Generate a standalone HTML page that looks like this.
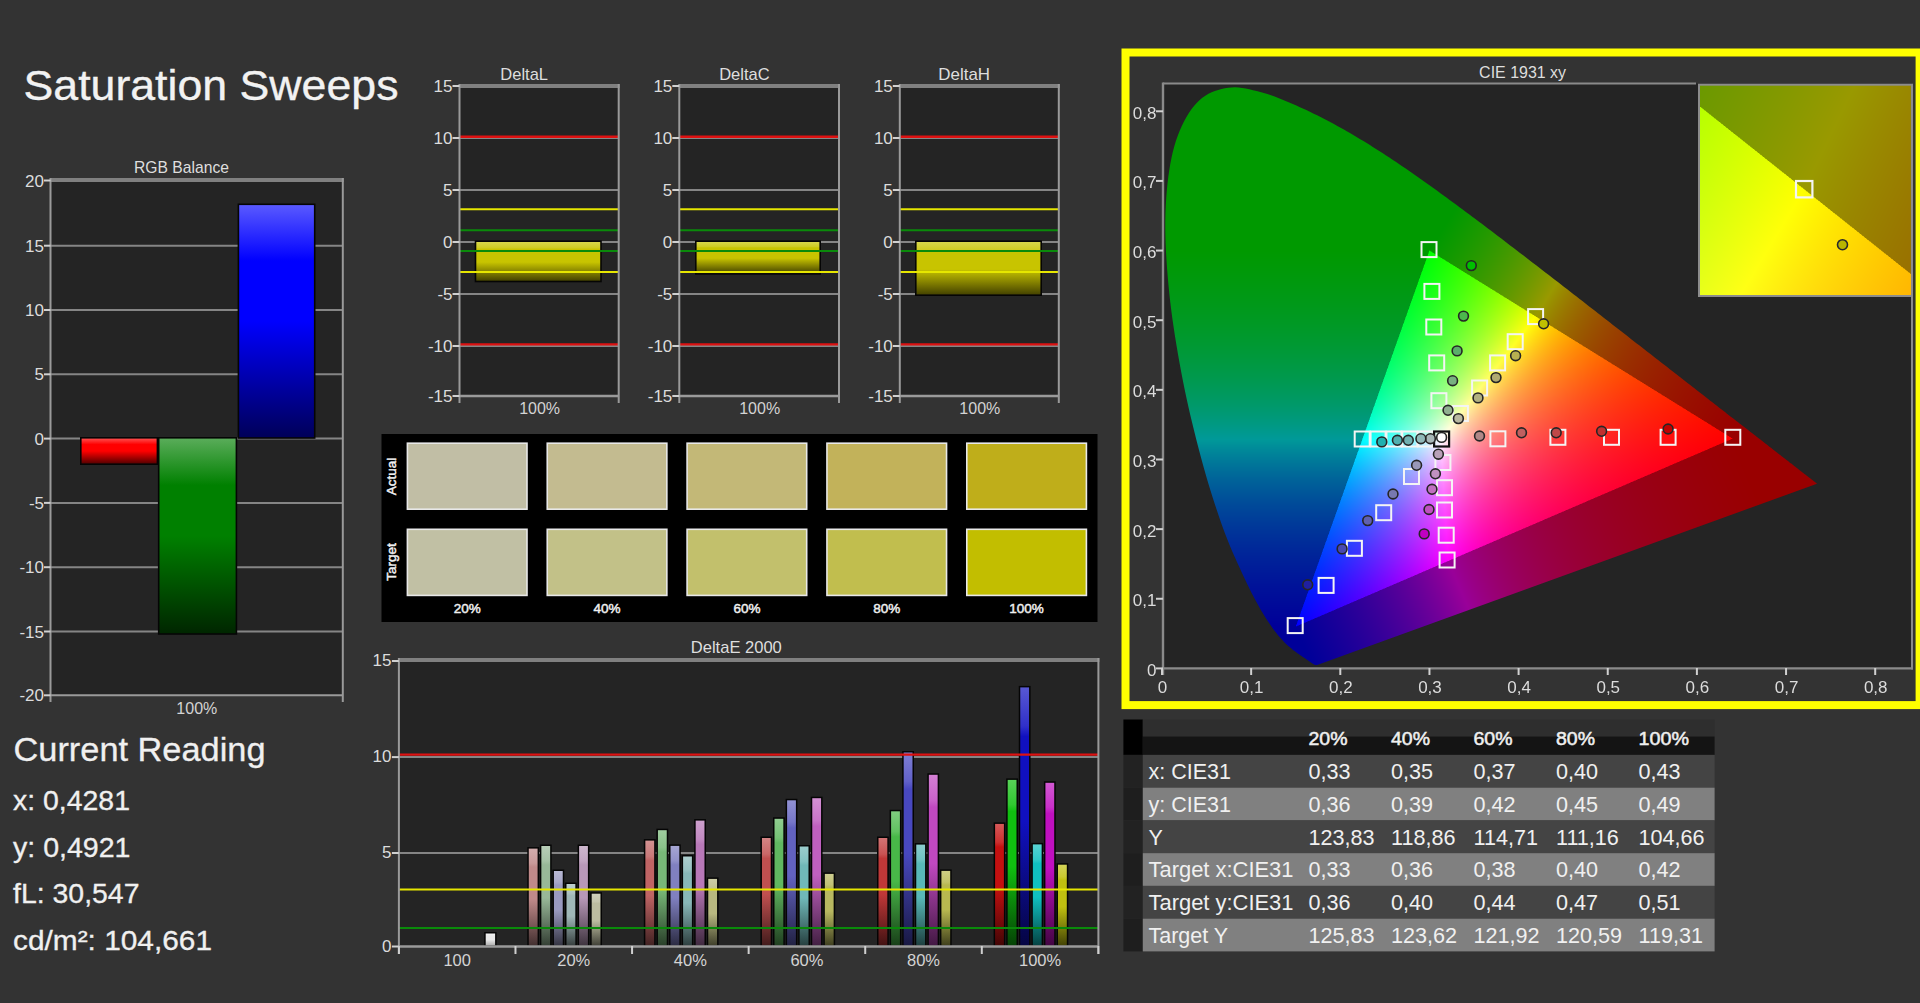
<!DOCTYPE html>
<html><head><meta charset="utf-8"><title>Saturation Sweeps</title>
<style>
html,body{margin:0;padding:0;background:#333333;}
body{width:1920px;height:1003px;overflow:hidden;position:relative;font-family:"Liberation Sans", sans-serif;}
svg{position:absolute;left:0;top:0;}
canvas{position:absolute;}
text{font-family:"Liberation Sans", sans-serif;}
</style></head><body>
<svg width="1920" height="1003" viewBox="0 0 1920 1003">
<defs><linearGradient id="g0" x1="0" y1="0" x2="0" y2="1"><stop offset="0" stop-color="#ff4c4c"/><stop offset="0.24" stop-color="#ff0000"/><stop offset="0.5" stop-color="#ff0000"/><stop offset="1" stop-color="#590000"/></linearGradient><linearGradient id="g1" x1="0" y1="0" x2="0" y2="1"><stop offset="0" stop-color="#59ac59"/><stop offset="0.24" stop-color="#008000"/><stop offset="0.5" stop-color="#008000"/><stop offset="1" stop-color="#002600"/></linearGradient><linearGradient id="g2" x1="0" y1="0" x2="0" y2="1"><stop offset="0" stop-color="#5959ff"/><stop offset="0.24" stop-color="#0000ff"/><stop offset="0.5" stop-color="#0000ff"/><stop offset="1" stop-color="#000059"/></linearGradient><linearGradient id="g3" x1="0" y1="0" x2="0" y2="1"><stop offset="0" stop-color="#d8d64c"/><stop offset="0.15" stop-color="#cfcc22"/><stop offset="0.19" stop-color="#c8c400"/><stop offset="0.52" stop-color="#c8c400"/><stop offset="1" stop-color="#464400"/></linearGradient><linearGradient id="g4" x1="0" y1="0" x2="0" y2="1"><stop offset="0" stop-color="#d3adad"/><stop offset="0.15" stop-color="#c99a9a"/><stop offset="0.19" stop-color="#c08a8a"/><stop offset="0.52" stop-color="#c08a8a"/><stop offset="1" stop-color="#433030"/></linearGradient><linearGradient id="g5" x1="0" y1="0" x2="0" y2="1"><stop offset="0" stop-color="#b7cdb7"/><stop offset="0.15" stop-color="#a6c2a6"/><stop offset="0.19" stop-color="#98b898"/><stop offset="0.52" stop-color="#98b898"/><stop offset="1" stop-color="#354035"/></linearGradient><linearGradient id="g6" x1="0" y1="0" x2="0" y2="1"><stop offset="0" stop-color="#b8b8d3"/><stop offset="0.15" stop-color="#a8a8c9"/><stop offset="0.19" stop-color="#9a9ac0"/><stop offset="0.52" stop-color="#9a9ac0"/><stop offset="1" stop-color="#353543"/></linearGradient><linearGradient id="g7" x1="0" y1="0" x2="0" y2="1"><stop offset="0" stop-color="#bccdcd"/><stop offset="0.15" stop-color="#adc2c2"/><stop offset="0.19" stop-color="#a0b8b8"/><stop offset="0.52" stop-color="#a0b8b8"/><stop offset="1" stop-color="#384040"/></linearGradient><linearGradient id="g8" x1="0" y1="0" x2="0" y2="1"><stop offset="0" stop-color="#cdb7cd"/><stop offset="0.15" stop-color="#c2a6c2"/><stop offset="0.19" stop-color="#b898b8"/><stop offset="0.52" stop-color="#b898b8"/><stop offset="1" stop-color="#403540"/></linearGradient><linearGradient id="g9" x1="0" y1="0" x2="0" y2="1"><stop offset="0" stop-color="#d0d0bc"/><stop offset="0.15" stop-color="#c5c5ad"/><stop offset="0.19" stop-color="#bcbca0"/><stop offset="0.52" stop-color="#bcbca0"/><stop offset="1" stop-color="#414138"/></linearGradient><linearGradient id="g10" x1="0" y1="0" x2="0" y2="1"><stop offset="0" stop-color="#d39292"/><stop offset="0.15" stop-color="#c97979"/><stop offset="0.19" stop-color="#c06464"/><stop offset="0.52" stop-color="#c06464"/><stop offset="1" stop-color="#432323"/></linearGradient><linearGradient id="g11" x1="0" y1="0" x2="0" y2="1"><stop offset="0" stop-color="#a0cda0"/><stop offset="0.15" stop-color="#8ac28a"/><stop offset="0.19" stop-color="#78b878"/><stop offset="0.52" stop-color="#78b878"/><stop offset="1" stop-color="#2a402a"/></linearGradient><linearGradient id="g12" x1="0" y1="0" x2="0" y2="1"><stop offset="0" stop-color="#a6a6d3"/><stop offset="0.15" stop-color="#9191c9"/><stop offset="0.19" stop-color="#8080c0"/><stop offset="0.52" stop-color="#8080c0"/><stop offset="1" stop-color="#2c2c43"/></linearGradient><linearGradient id="g13" x1="0" y1="0" x2="0" y2="1"><stop offset="0" stop-color="#accdcd"/><stop offset="0.15" stop-color="#98c2c2"/><stop offset="0.19" stop-color="#88b8b8"/><stop offset="0.52" stop-color="#88b8b8"/><stop offset="1" stop-color="#2f4040"/></linearGradient><linearGradient id="g14" x1="0" y1="0" x2="0" y2="1"><stop offset="0" stop-color="#cda0cd"/><stop offset="0.15" stop-color="#c28ac2"/><stop offset="0.19" stop-color="#b878b8"/><stop offset="0.52" stop-color="#b878b8"/><stop offset="1" stop-color="#402a40"/></linearGradient><linearGradient id="g15" x1="0" y1="0" x2="0" y2="1"><stop offset="0" stop-color="#cdcda6"/><stop offset="0.15" stop-color="#c2c291"/><stop offset="0.19" stop-color="#b8b880"/><stop offset="0.52" stop-color="#b8b880"/><stop offset="1" stop-color="#40402c"/></linearGradient><linearGradient id="g16" x1="0" y1="0" x2="0" y2="1"><stop offset="0" stop-color="#d38484"/><stop offset="0.15" stop-color="#c96868"/><stop offset="0.19" stop-color="#c05050"/><stop offset="0.52" stop-color="#c05050"/><stop offset="1" stop-color="#431c1c"/></linearGradient><linearGradient id="g17" x1="0" y1="0" x2="0" y2="1"><stop offset="0" stop-color="#90cd90"/><stop offset="0.15" stop-color="#75c275"/><stop offset="0.19" stop-color="#60b860"/><stop offset="0.52" stop-color="#60b860"/><stop offset="1" stop-color="#214021"/></linearGradient><linearGradient id="g18" x1="0" y1="0" x2="0" y2="1"><stop offset="0" stop-color="#9191d3"/><stop offset="0.15" stop-color="#7777c9"/><stop offset="0.19" stop-color="#6262c0"/><stop offset="0.52" stop-color="#6262c0"/><stop offset="1" stop-color="#222243"/></linearGradient><linearGradient id="g19" x1="0" y1="0" x2="0" y2="1"><stop offset="0" stop-color="#9bcdcd"/><stop offset="0.15" stop-color="#83c2c2"/><stop offset="0.19" stop-color="#70b8b8"/><stop offset="0.52" stop-color="#70b8b8"/><stop offset="1" stop-color="#274040"/></linearGradient><linearGradient id="g20" x1="0" y1="0" x2="0" y2="1"><stop offset="0" stop-color="#d390d3"/><stop offset="0.15" stop-color="#c975c9"/><stop offset="0.19" stop-color="#c060c0"/><stop offset="0.52" stop-color="#c060c0"/><stop offset="1" stop-color="#432143"/></linearGradient><linearGradient id="g21" x1="0" y1="0" x2="0" y2="1"><stop offset="0" stop-color="#cdcd90"/><stop offset="0.15" stop-color="#c2c275"/><stop offset="0.19" stop-color="#b8b860"/><stop offset="0.52" stop-color="#b8b860"/><stop offset="1" stop-color="#404021"/></linearGradient><linearGradient id="g22" x1="0" y1="0" x2="0" y2="1"><stop offset="0" stop-color="#d37474"/><stop offset="0.15" stop-color="#c95353"/><stop offset="0.19" stop-color="#c03838"/><stop offset="0.52" stop-color="#c03838"/><stop offset="1" stop-color="#431313"/></linearGradient><linearGradient id="g23" x1="0" y1="0" x2="0" y2="1"><stop offset="0" stop-color="#7fcd7f"/><stop offset="0.15" stop-color="#61c261"/><stop offset="0.19" stop-color="#48b848"/><stop offset="0.52" stop-color="#48b848"/><stop offset="1" stop-color="#194019"/></linearGradient><linearGradient id="g24" x1="0" y1="0" x2="0" y2="1"><stop offset="0" stop-color="#7f7fd3"/><stop offset="0.15" stop-color="#6161c9"/><stop offset="0.19" stop-color="#4848c0"/><stop offset="0.52" stop-color="#4848c0"/><stop offset="1" stop-color="#191943"/></linearGradient><linearGradient id="g25" x1="0" y1="0" x2="0" y2="1"><stop offset="0" stop-color="#8acdcd"/><stop offset="0.15" stop-color="#6fc2c2"/><stop offset="0.19" stop-color="#58b8b8"/><stop offset="0.52" stop-color="#58b8b8"/><stop offset="1" stop-color="#1e4040"/></linearGradient><linearGradient id="g26" x1="0" y1="0" x2="0" y2="1"><stop offset="0" stop-color="#d37fd3"/><stop offset="0.15" stop-color="#c961c9"/><stop offset="0.19" stop-color="#c048c0"/><stop offset="0.52" stop-color="#c048c0"/><stop offset="1" stop-color="#431943"/></linearGradient><linearGradient id="g27" x1="0" y1="0" x2="0" y2="1"><stop offset="0" stop-color="#cdcd84"/><stop offset="0.15" stop-color="#c2c268"/><stop offset="0.19" stop-color="#b8b850"/><stop offset="0.52" stop-color="#b8b850"/><stop offset="1" stop-color="#40401c"/></linearGradient><linearGradient id="g28" x1="0" y1="0" x2="0" y2="1"><stop offset="0" stop-color="#d65858"/><stop offset="0.15" stop-color="#cc3030"/><stop offset="0.19" stop-color="#c41010"/><stop offset="0.52" stop-color="#c41010"/><stop offset="1" stop-color="#440505"/></linearGradient><linearGradient id="g29" x1="0" y1="0" x2="0" y2="1"><stop offset="0" stop-color="#58d358"/><stop offset="0.15" stop-color="#30c930"/><stop offset="0.19" stop-color="#10c010"/><stop offset="0.52" stop-color="#10c010"/><stop offset="1" stop-color="#054305"/></linearGradient><linearGradient id="g30" x1="0" y1="0" x2="0" y2="1"><stop offset="0" stop-color="#5858d3"/><stop offset="0.15" stop-color="#3030c9"/><stop offset="0.19" stop-color="#1010c0"/><stop offset="0.52" stop-color="#1010c0"/><stop offset="1" stop-color="#050543"/></linearGradient><linearGradient id="g31" x1="0" y1="0" x2="0" y2="1"><stop offset="0" stop-color="#58d3d3"/><stop offset="0.15" stop-color="#30c9c9"/><stop offset="0.19" stop-color="#10c0c0"/><stop offset="0.52" stop-color="#10c0c0"/><stop offset="1" stop-color="#054343"/></linearGradient><linearGradient id="g32" x1="0" y1="0" x2="0" y2="1"><stop offset="0" stop-color="#d358d3"/><stop offset="0.15" stop-color="#c930c9"/><stop offset="0.19" stop-color="#c010c0"/><stop offset="0.52" stop-color="#c010c0"/><stop offset="1" stop-color="#430543"/></linearGradient><linearGradient id="g33" x1="0" y1="0" x2="0" y2="1"><stop offset="0" stop-color="#d3d358"/><stop offset="0.15" stop-color="#c9c930"/><stop offset="0.19" stop-color="#c0c010"/><stop offset="0.52" stop-color="#c0c010"/><stop offset="1" stop-color="#434305"/></linearGradient><linearGradient id="g34" x1="0" y1="0" x2="0" y2="1"><stop offset="0" stop-color="#f1f1f1"/><stop offset="0.15" stop-color="#ececec"/><stop offset="0.19" stop-color="#e8e8e8"/><stop offset="0.52" stop-color="#e8e8e8"/><stop offset="1" stop-color="#aeaeae"/></linearGradient><clipPath id="clL"><polygon points="1317.21,664.92 1317.17,664.93 1317.1,664.95 1317.03,664.97 1316.94,664.99 1316.85,665.01 1316.74,665.03 1316.63,665.04 1316.5,665.06 1316.36,665.07 1316.22,665.07 1316.06,665.07 1315.87,665.06 1315.63,665.03 1315.36,664.98 1315.07,664.93 1314.8,664.85 1314.56,664.75 1314.32,664.64 1314.08,664.51 1313.82,664.36 1313.54,664.2 1313.25,664.02 1312.93,663.82 1312.57,663.59 1312.18,663.34 1311.74,663.06 1311.28,662.75 1310.79,662.41 1310.28,662.05 1309.75,661.66 1309.18,661.25 1308.56,660.81 1307.9,660.35 1307.2,659.87 1306.45,659.35 1305.62,658.79 1304.72,658.18 1303.74,657.52 1302.71,656.82 1301.61,656.07 1300.46,655.29 1299.25,654.47 1297.98,653.58 1296.62,652.59 1295.18,651.52 1293.66,650.38 1292.06,649.12 1290.38,647.72 1288.64,646.22 1286.83,644.64 1284.91,642.82 1282.8,640.61 1280.5,638.06 1278.05,635.2 1275.43,631.93 1272.64,628.15 1269.68,623.92 1266.56,619.27 1263.24,614.01 1259.71,607.95 1255.96,601.15 1252,593.67 1247.82,585.34 1243.39,575.99 1238.64,565.66 1233.6,554.42 1228.42,542.12 1223.25,528.63 1218.07,513.88 1212.82,497.96 1207.59,480.95 1202.47,462.96 1197.37,443.75 1192.27,423.35 1187.39,402.26 1182.95,381 1178.9,359.35 1175.15,337.17 1171.89,315.02 1169.31,293.46 1167.36,272.39 1165.98,251.61 1165.31,231.48 1165.48,212.4 1166.5,194.21 1168.3,176.8 1170.92,160.58 1174.39,145.96 1178.81,132.9 1184.12,121.24 1190.14,111.18 1196.68,102.92 1203.82,96.69 1211.63,92.31 1219.85,89.44 1228.24,87.74 1236.84,87.42 1245.74,88.56 1254.78,90.61 1263.81,93.03 1272.85,95.88 1281.96,99.38 1291.02,103.23 1299.92,107.17 1308.6,111.16 1317.15,115.33 1325.6,119.65 1333.97,124.09 1342.25,128.66 1350.44,133.35 1358.57,138.17 1366.69,143.11 1374.8,148.16 1382.87,153.35 1390.93,158.63 1398.96,164 1406.97,169.45 1414.95,174.99 1422.91,180.61 1430.88,186.28 1438.84,192.01 1446.79,197.81 1454.74,203.66 1462.7,209.54 1470.68,215.47 1478.67,221.45 1486.65,227.47 1494.62,233.5 1502.57,239.55 1510.51,245.63 1518.44,251.72 1526.36,257.8 1534.27,263.89 1542.19,269.97 1550.07,276.05 1557.92,282.11 1565.71,288.15 1573.48,294.18 1581.19,300.18 1588.85,306.13 1596.45,312.05 1604.01,317.93 1611.49,323.77 1618.89,329.53 1626.22,335.24 1633.48,340.89 1640.64,346.47 1647.69,351.96 1654.64,357.35 1661.5,362.67 1668.22,367.88 1674.79,372.99 1681.21,377.99 1687.49,382.9 1693.59,387.68 1699.49,392.28 1705.14,396.68 1710.59,400.92 1715.86,405.01 1720.97,408.99 1725.95,412.87 1730.78,416.63 1735.43,420.24 1739.87,423.69 1744.09,426.95 1748.1,430.04 1751.92,432.99 1755.56,435.8 1759.02,438.49 1762.28,441.04 1765.37,443.46 1768.31,445.76 1771.08,447.93 1773.68,449.96 1776.14,451.88 1778.47,453.7 1780.68,455.41 1782.76,457.01 1784.72,458.52 1786.58,459.97 1788.35,461.34 1790.01,462.64 1791.58,463.87 1793.09,465.05 1794.55,466.19 1795.94,467.28 1797.27,468.31 1798.53,469.3 1799.74,470.24 1800.88,471.14 1801.96,471.98 1802.99,472.78 1803.96,473.53 1804.88,474.23 1805.75,474.88 1806.55,475.5 1807.3,476.07 1807.99,476.61 1808.63,477.11 1809.23,477.59 1809.8,478.03 1810.33,478.44 1810.82,478.83 1811.28,479.19 1811.71,479.52 1812.1,479.83 1812.47,480.12 1812.8,480.37 1813.08,480.6 1813.33,480.79 1813.56,480.97 1813.78,481.14 1813.98,481.3 1814.16,481.44 1814.35,481.59 1814.58,481.76 1814.86,481.99 1815.18,482.23 1815.51,482.49 1815.83,482.74 1816.15,482.99 1816.48,483.25 1816.78,483.48 1816.99,483.65"/></clipPath><clipPath id="clT"><polygon points="1732.56,438.59 1429.45,250.56 1295.72,626.62"/></clipPath><linearGradient id="fbL" gradientUnits="userSpaceOnUse" x1="0" y1="250.56" x2="0" y2="626.62"><stop offset="0" stop-color="#009900"/><stop offset="0.05" stop-color="#009908"/><stop offset="0.1" stop-color="#009911"/><stop offset="0.15" stop-color="#00991b"/><stop offset="0.2" stop-color="#009926"/><stop offset="0.25" stop-color="#009933"/><stop offset="0.3" stop-color="#009941"/><stop offset="0.35" stop-color="#009952"/><stop offset="0.4" stop-color="#009965"/><stop offset="0.45" stop-color="#00997c"/><stop offset="0.5" stop-color="#009998"/><stop offset="0.55" stop-color="#007e99"/><stop offset="0.6" stop-color="#006799"/><stop offset="0.65" stop-color="#005399"/><stop offset="0.7" stop-color="#004299"/><stop offset="0.75" stop-color="#003399"/><stop offset="0.8" stop-color="#002799"/><stop offset="0.85" stop-color="#001b99"/><stop offset="0.9" stop-color="#001199"/><stop offset="0.95" stop-color="#000899"/><stop offset="1" stop-color="#000099"/></linearGradient><linearGradient id="fbGR" gradientUnits="userSpaceOnUse" x1="1429.45" y1="250.56" x2="1732.56" y2="438.59"><stop offset="0" stop-color="#009900"/><stop offset="0.05" stop-color="#0f9900"/><stop offset="0.1" stop-color="#1f9900"/><stop offset="0.15" stop-color="#329900"/><stop offset="0.2" stop-color="#479900"/><stop offset="0.25" stop-color="#5e9900"/><stop offset="0.3" stop-color="#799900"/><stop offset="0.35" stop-color="#989900"/><stop offset="0.4" stop-color="#997c00"/><stop offset="0.45" stop-color="#996500"/><stop offset="0.5" stop-color="#995300"/><stop offset="0.55" stop-color="#994400"/><stop offset="0.6" stop-color="#993700"/><stop offset="0.65" stop-color="#992d00"/><stop offset="0.7" stop-color="#992300"/><stop offset="0.75" stop-color="#991c00"/><stop offset="0.8" stop-color="#991500"/><stop offset="0.85" stop-color="#990f00"/><stop offset="0.9" stop-color="#990900"/><stop offset="0.95" stop-color="#990400"/><stop offset="1" stop-color="#990000"/></linearGradient><linearGradient id="fbBR" gradientUnits="userSpaceOnUse" x1="1295.72" y1="626.62" x2="1732.56" y2="438.59"><stop offset="0" stop-color="#000099"/><stop offset="0.05" stop-color="#0f0099"/><stop offset="0.1" stop-color="#200099"/><stop offset="0.15" stop-color="#320099"/><stop offset="0.2" stop-color="#470099"/><stop offset="0.25" stop-color="#5f0099"/><stop offset="0.3" stop-color="#7a0099"/><stop offset="0.35" stop-color="#990098"/><stop offset="0.4" stop-color="#99007b"/><stop offset="0.45" stop-color="#990064"/><stop offset="0.5" stop-color="#990052"/><stop offset="0.55" stop-color="#990043"/><stop offset="0.6" stop-color="#990037"/><stop offset="0.65" stop-color="#99002c"/><stop offset="0.7" stop-color="#990023"/><stop offset="0.75" stop-color="#99001b"/><stop offset="0.8" stop-color="#990014"/><stop offset="0.85" stop-color="#99000e"/><stop offset="0.9" stop-color="#990009"/><stop offset="0.95" stop-color="#990004"/><stop offset="1" stop-color="#990000"/></linearGradient><radialGradient id="fbW" gradientUnits="userSpaceOnUse" cx="1440.77" cy="439.28" r="260"><stop offset="0" stop-color="#fff" stop-opacity="1"/><stop offset="0.12" stop-color="#fff" stop-opacity="0.62"/><stop offset="0.25" stop-color="#fff" stop-opacity="0.4"/><stop offset="0.45" stop-color="#fff" stop-opacity="0.2"/><stop offset="0.7" stop-color="#fff" stop-opacity="0.06"/><stop offset="1" stop-color="#fff" stop-opacity="0"/></radialGradient><clipPath id="clI"><rect x="1699" y="85" width="213" height="211"/></clipPath><linearGradient id="fbIin" gradientUnits="userSpaceOnUse" x1="1636" y1="55.79" x2="1978.4" y2="327.7"><stop offset="0" stop-color="#91ff00"/><stop offset="0.1" stop-color="#a5ff00"/><stop offset="0.2" stop-color="#baff00"/><stop offset="0.3" stop-color="#d0ff00"/><stop offset="0.4" stop-color="#e8ff00"/><stop offset="0.5" stop-color="#fffd00"/><stop offset="0.6" stop-color="#ffe400"/><stop offset="0.7" stop-color="#ffcf00"/><stop offset="0.8" stop-color="#ffbc00"/><stop offset="0.9" stop-color="#ffab00"/><stop offset="1" stop-color="#ff9b00"/></linearGradient><linearGradient id="fbIout" gradientUnits="userSpaceOnUse" x1="1636" y1="55.79" x2="1978.4" y2="327.7"><stop offset="0" stop-color="#579900"/><stop offset="0.1" stop-color="#639900"/><stop offset="0.2" stop-color="#6f9900"/><stop offset="0.3" stop-color="#7d9900"/><stop offset="0.4" stop-color="#8b9900"/><stop offset="0.5" stop-color="#999800"/><stop offset="0.6" stop-color="#998900"/><stop offset="0.7" stop-color="#997c00"/><stop offset="0.8" stop-color="#997100"/><stop offset="0.9" stop-color="#996600"/><stop offset="1" stop-color="#995d00"/></linearGradient></defs>
<rect x="0" y="0" width="1920" height="1003" fill="#333333"/>
<text x="23.5" y="99.5" font-size="43" fill="#f2f2f2" text-anchor="start" font-weight="normal" stroke="#f2f2f2" stroke-width="0.35" textLength="375" lengthAdjust="spacingAndGlyphs">Saturation Sweeps</text><rect x="50.5" y="180" width="292.3" height="515.5" fill="#242424"/><text x="181.5" y="173.4" font-size="17" fill="#dedede" text-anchor="middle" font-weight="normal" textLength="95" lengthAdjust="spacingAndGlyphs">RGB Balance</text><line x1="50.5" y1="245.7" x2="342.8" y2="245.7" stroke="#858585" stroke-width="2"/><line x1="50.5" y1="310" x2="342.8" y2="310" stroke="#858585" stroke-width="2"/><line x1="50.5" y1="374.3" x2="342.8" y2="374.3" stroke="#858585" stroke-width="2"/><line x1="50.5" y1="438.6" x2="342.8" y2="438.6" stroke="#858585" stroke-width="2"/><line x1="50.5" y1="502.9" x2="342.8" y2="502.9" stroke="#858585" stroke-width="2"/><line x1="50.5" y1="567.2" x2="342.8" y2="567.2" stroke="#858585" stroke-width="2"/><line x1="50.5" y1="631.5" x2="342.8" y2="631.5" stroke="#858585" stroke-width="2"/><rect x="80" y="437" width="78.2" height="28" fill="#050505"/><rect x="81.6" y="438.6" width="75" height="24.8" fill="url(#g0)"/><rect x="157.9" y="437" width="79.3" height="197.8" fill="#050505"/><rect x="159.5" y="438.6" width="76.1" height="194.6" fill="url(#g1)"/><rect x="237.6" y="203.5" width="77.9" height="235.3" fill="#050505"/><rect x="239.2" y="205.1" width="74.7" height="232.1" fill="url(#g2)"/><line x1="50.5" y1="180" x2="343.8" y2="180" stroke="#808080" stroke-width="4"/><line x1="50.5" y1="178" x2="50.5" y2="702" stroke="#9a9a9a" stroke-width="2"/><line x1="342.8" y1="178" x2="342.8" y2="702" stroke="#9a9a9a" stroke-width="2"/><line x1="50.5" y1="695.3" x2="342.8" y2="695.3" stroke="#9a9a9a" stroke-width="2"/><line x1="44" y1="180.5" x2="50.5" y2="180.5" stroke="#d0d0d0" stroke-width="2"/><text x="44" y="186.5" font-size="17" fill="#dcdcdc" text-anchor="end" font-weight="normal">20</text><line x1="44" y1="245.7" x2="50.5" y2="245.7" stroke="#d0d0d0" stroke-width="2"/><text x="44" y="251.7" font-size="17" fill="#dcdcdc" text-anchor="end" font-weight="normal">15</text><line x1="44" y1="310" x2="50.5" y2="310" stroke="#d0d0d0" stroke-width="2"/><text x="44" y="316" font-size="17" fill="#dcdcdc" text-anchor="end" font-weight="normal">10</text><line x1="44" y1="374.3" x2="50.5" y2="374.3" stroke="#d0d0d0" stroke-width="2"/><text x="44" y="380.3" font-size="17" fill="#dcdcdc" text-anchor="end" font-weight="normal">5</text><line x1="44" y1="438.6" x2="50.5" y2="438.6" stroke="#d0d0d0" stroke-width="2"/><text x="44" y="444.6" font-size="17" fill="#dcdcdc" text-anchor="end" font-weight="normal">0</text><line x1="44" y1="502.9" x2="50.5" y2="502.9" stroke="#d0d0d0" stroke-width="2"/><text x="44" y="508.9" font-size="17" fill="#dcdcdc" text-anchor="end" font-weight="normal">-5</text><line x1="44" y1="567.2" x2="50.5" y2="567.2" stroke="#d0d0d0" stroke-width="2"/><text x="44" y="573.2" font-size="17" fill="#dcdcdc" text-anchor="end" font-weight="normal">-10</text><line x1="44" y1="631.5" x2="50.5" y2="631.5" stroke="#d0d0d0" stroke-width="2"/><text x="44" y="637.5" font-size="17" fill="#dcdcdc" text-anchor="end" font-weight="normal">-15</text><line x1="44" y1="695.3" x2="50.5" y2="695.3" stroke="#d0d0d0" stroke-width="2"/><text x="44" y="701.3" font-size="17" fill="#dcdcdc" text-anchor="end" font-weight="normal">-20</text><text x="196.8" y="713.5" font-size="16" fill="#d4d4d4" text-anchor="middle" font-weight="normal">100%</text><rect x="459.5" y="86" width="159.2" height="310" fill="#242424"/><text x="524.2" y="79.5" font-size="17" fill="#dedede" text-anchor="middle" font-weight="normal" textLength="47.7" lengthAdjust="spacingAndGlyphs">DeltaL</text><line x1="459.5" y1="138" x2="618.7" y2="138" stroke="#858585" stroke-width="2"/><line x1="459.5" y1="190" x2="618.7" y2="190" stroke="#858585" stroke-width="2"/><line x1="459.5" y1="242" x2="618.7" y2="242" stroke="#858585" stroke-width="2"/><line x1="459.5" y1="294" x2="618.7" y2="294" stroke="#858585" stroke-width="2"/><line x1="459.5" y1="346" x2="618.7" y2="346" stroke="#858585" stroke-width="2"/><rect x="474.7" y="240.4" width="127.1" height="41.9" fill="#050505"/><rect x="476.3" y="242" width="123.9" height="38.7" fill="url(#g3)"/><line x1="459.5" y1="209.3" x2="618.7" y2="209.3" stroke="#e6e600" stroke-width="2"/><line x1="459.5" y1="272.1" x2="618.7" y2="272.1" stroke="#e6e600" stroke-width="2"/><line x1="459.5" y1="230.2" x2="618.7" y2="230.2" stroke="#0a8a0a" stroke-width="2"/><line x1="459.5" y1="250.9" x2="618.7" y2="250.9" stroke="#0a8a0a" stroke-width="2"/><line x1="459.5" y1="136.7" x2="618.7" y2="136.7" stroke="#dd1111" stroke-width="2.4"/><line x1="459.5" y1="344.4" x2="618.7" y2="344.4" stroke="#dd1111" stroke-width="2.4"/><line x1="459.5" y1="86" x2="619.7" y2="86" stroke="#808080" stroke-width="4"/><line x1="459.5" y1="84" x2="459.5" y2="403" stroke="#9a9a9a" stroke-width="2"/><line x1="618.7" y1="84" x2="618.7" y2="403" stroke="#9a9a9a" stroke-width="2"/><line x1="459.5" y1="396" x2="618.7" y2="396" stroke="#9a9a9a" stroke-width="2.4"/><line x1="452.5" y1="86" x2="459.5" y2="86" stroke="#d0d0d0" stroke-width="2"/><text x="452.5" y="92" font-size="17" fill="#dcdcdc" text-anchor="end" font-weight="normal">15</text><line x1="452.5" y1="138" x2="459.5" y2="138" stroke="#d0d0d0" stroke-width="2"/><text x="452.5" y="144" font-size="17" fill="#dcdcdc" text-anchor="end" font-weight="normal">10</text><line x1="452.5" y1="190" x2="459.5" y2="190" stroke="#d0d0d0" stroke-width="2"/><text x="452.5" y="196" font-size="17" fill="#dcdcdc" text-anchor="end" font-weight="normal">5</text><line x1="452.5" y1="242" x2="459.5" y2="242" stroke="#d0d0d0" stroke-width="2"/><text x="452.5" y="248" font-size="17" fill="#dcdcdc" text-anchor="end" font-weight="normal">0</text><line x1="452.5" y1="294" x2="459.5" y2="294" stroke="#d0d0d0" stroke-width="2"/><text x="452.5" y="300" font-size="17" fill="#dcdcdc" text-anchor="end" font-weight="normal">-5</text><line x1="452.5" y1="346" x2="459.5" y2="346" stroke="#d0d0d0" stroke-width="2"/><text x="452.5" y="352" font-size="17" fill="#dcdcdc" text-anchor="end" font-weight="normal">-10</text><line x1="452.5" y1="396" x2="459.5" y2="396" stroke="#d0d0d0" stroke-width="2"/><text x="452.5" y="402" font-size="17" fill="#dcdcdc" text-anchor="end" font-weight="normal">-15</text><text x="539.6" y="414" font-size="16" fill="#d4d4d4" text-anchor="middle" font-weight="normal">100%</text><rect x="679.3" y="86" width="159.7" height="310" fill="#242424"/><text x="744.4" y="79.5" font-size="17" fill="#dedede" text-anchor="middle" font-weight="normal" textLength="50.5" lengthAdjust="spacingAndGlyphs">DeltaC</text><line x1="679.3" y1="138" x2="839" y2="138" stroke="#858585" stroke-width="2"/><line x1="679.3" y1="190" x2="839" y2="190" stroke="#858585" stroke-width="2"/><line x1="679.3" y1="242" x2="839" y2="242" stroke="#858585" stroke-width="2"/><line x1="679.3" y1="294" x2="839" y2="294" stroke="#858585" stroke-width="2"/><line x1="679.3" y1="346" x2="839" y2="346" stroke="#858585" stroke-width="2"/><rect x="695" y="240.4" width="126" height="34.3" fill="#050505"/><rect x="696.6" y="242" width="122.8" height="31.1" fill="url(#g3)"/><line x1="679.3" y1="209.3" x2="839" y2="209.3" stroke="#e6e600" stroke-width="2"/><line x1="679.3" y1="272.1" x2="839" y2="272.1" stroke="#e6e600" stroke-width="2"/><line x1="679.3" y1="230.2" x2="839" y2="230.2" stroke="#0a8a0a" stroke-width="2"/><line x1="679.3" y1="250.9" x2="839" y2="250.9" stroke="#0a8a0a" stroke-width="2"/><line x1="679.3" y1="136.7" x2="839" y2="136.7" stroke="#dd1111" stroke-width="2.4"/><line x1="679.3" y1="344.4" x2="839" y2="344.4" stroke="#dd1111" stroke-width="2.4"/><line x1="679.3" y1="86" x2="840" y2="86" stroke="#808080" stroke-width="4"/><line x1="679.3" y1="84" x2="679.3" y2="403" stroke="#9a9a9a" stroke-width="2"/><line x1="839" y1="84" x2="839" y2="403" stroke="#9a9a9a" stroke-width="2"/><line x1="679.3" y1="396" x2="839" y2="396" stroke="#9a9a9a" stroke-width="2.4"/><line x1="672.3" y1="86" x2="679.3" y2="86" stroke="#d0d0d0" stroke-width="2"/><text x="672.3" y="92" font-size="17" fill="#dcdcdc" text-anchor="end" font-weight="normal">15</text><line x1="672.3" y1="138" x2="679.3" y2="138" stroke="#d0d0d0" stroke-width="2"/><text x="672.3" y="144" font-size="17" fill="#dcdcdc" text-anchor="end" font-weight="normal">10</text><line x1="672.3" y1="190" x2="679.3" y2="190" stroke="#d0d0d0" stroke-width="2"/><text x="672.3" y="196" font-size="17" fill="#dcdcdc" text-anchor="end" font-weight="normal">5</text><line x1="672.3" y1="242" x2="679.3" y2="242" stroke="#d0d0d0" stroke-width="2"/><text x="672.3" y="248" font-size="17" fill="#dcdcdc" text-anchor="end" font-weight="normal">0</text><line x1="672.3" y1="294" x2="679.3" y2="294" stroke="#d0d0d0" stroke-width="2"/><text x="672.3" y="300" font-size="17" fill="#dcdcdc" text-anchor="end" font-weight="normal">-5</text><line x1="672.3" y1="346" x2="679.3" y2="346" stroke="#d0d0d0" stroke-width="2"/><text x="672.3" y="352" font-size="17" fill="#dcdcdc" text-anchor="end" font-weight="normal">-10</text><line x1="672.3" y1="396" x2="679.3" y2="396" stroke="#d0d0d0" stroke-width="2"/><text x="672.3" y="402" font-size="17" fill="#dcdcdc" text-anchor="end" font-weight="normal">-15</text><text x="759.65" y="414" font-size="16" fill="#d4d4d4" text-anchor="middle" font-weight="normal">100%</text><rect x="899.8" y="86" width="159" height="310" fill="#242424"/><text x="964.2" y="79.5" font-size="17" fill="#dedede" text-anchor="middle" font-weight="normal" textLength="51.7" lengthAdjust="spacingAndGlyphs">DeltaH</text><line x1="899.8" y1="138" x2="1058.8" y2="138" stroke="#858585" stroke-width="2"/><line x1="899.8" y1="190" x2="1058.8" y2="190" stroke="#858585" stroke-width="2"/><line x1="899.8" y1="242" x2="1058.8" y2="242" stroke="#858585" stroke-width="2"/><line x1="899.8" y1="294" x2="1058.8" y2="294" stroke="#858585" stroke-width="2"/><line x1="899.8" y1="346" x2="1058.8" y2="346" stroke="#858585" stroke-width="2"/><rect x="915" y="240.4" width="127" height="55.6" fill="#050505"/><rect x="916.6" y="242" width="123.8" height="52.4" fill="url(#g3)"/><line x1="899.8" y1="209.3" x2="1058.8" y2="209.3" stroke="#e6e600" stroke-width="2"/><line x1="899.8" y1="272.1" x2="1058.8" y2="272.1" stroke="#e6e600" stroke-width="2"/><line x1="899.8" y1="230.2" x2="1058.8" y2="230.2" stroke="#0a8a0a" stroke-width="2"/><line x1="899.8" y1="250.9" x2="1058.8" y2="250.9" stroke="#0a8a0a" stroke-width="2"/><line x1="899.8" y1="136.7" x2="1058.8" y2="136.7" stroke="#dd1111" stroke-width="2.4"/><line x1="899.8" y1="344.4" x2="1058.8" y2="344.4" stroke="#dd1111" stroke-width="2.4"/><line x1="899.8" y1="86" x2="1059.8" y2="86" stroke="#808080" stroke-width="4"/><line x1="899.8" y1="84" x2="899.8" y2="403" stroke="#9a9a9a" stroke-width="2"/><line x1="1058.8" y1="84" x2="1058.8" y2="403" stroke="#9a9a9a" stroke-width="2"/><line x1="899.8" y1="396" x2="1058.8" y2="396" stroke="#9a9a9a" stroke-width="2.4"/><line x1="892.8" y1="86" x2="899.8" y2="86" stroke="#d0d0d0" stroke-width="2"/><text x="892.8" y="92" font-size="17" fill="#dcdcdc" text-anchor="end" font-weight="normal">15</text><line x1="892.8" y1="138" x2="899.8" y2="138" stroke="#d0d0d0" stroke-width="2"/><text x="892.8" y="144" font-size="17" fill="#dcdcdc" text-anchor="end" font-weight="normal">10</text><line x1="892.8" y1="190" x2="899.8" y2="190" stroke="#d0d0d0" stroke-width="2"/><text x="892.8" y="196" font-size="17" fill="#dcdcdc" text-anchor="end" font-weight="normal">5</text><line x1="892.8" y1="242" x2="899.8" y2="242" stroke="#d0d0d0" stroke-width="2"/><text x="892.8" y="248" font-size="17" fill="#dcdcdc" text-anchor="end" font-weight="normal">0</text><line x1="892.8" y1="294" x2="899.8" y2="294" stroke="#d0d0d0" stroke-width="2"/><text x="892.8" y="300" font-size="17" fill="#dcdcdc" text-anchor="end" font-weight="normal">-5</text><line x1="892.8" y1="346" x2="899.8" y2="346" stroke="#d0d0d0" stroke-width="2"/><text x="892.8" y="352" font-size="17" fill="#dcdcdc" text-anchor="end" font-weight="normal">-10</text><line x1="892.8" y1="396" x2="899.8" y2="396" stroke="#d0d0d0" stroke-width="2"/><text x="892.8" y="402" font-size="17" fill="#dcdcdc" text-anchor="end" font-weight="normal">-15</text><text x="979.8" y="414" font-size="16" fill="#d4d4d4" text-anchor="middle" font-weight="normal">100%</text><rect x="381.5" y="434" width="716" height="188" fill="#000000"/><rect x="407.4" y="443.2" width="119.6" height="66" fill="#c1bea5" stroke="#e8e8e8" stroke-width="1.6"/><rect x="407.4" y="529.3" width="119.6" height="66.1" fill="#c1c0a4" stroke="#e8e8e8" stroke-width="1.6"/><text x="467.2" y="612.5" font-size="13.5" fill="#f0f0f0" text-anchor="middle" font-weight="normal" stroke="#f0f0f0" stroke-width="0.45">20%</text><rect x="547.25" y="443.2" width="119.6" height="66" fill="#c3bb90" stroke="#e8e8e8" stroke-width="1.6"/><rect x="547.25" y="529.3" width="119.6" height="66.1" fill="#c2c188" stroke="#e8e8e8" stroke-width="1.6"/><text x="607.05" y="612.5" font-size="13.5" fill="#f0f0f0" text-anchor="middle" font-weight="normal" stroke="#f0f0f0" stroke-width="0.45">40%</text><rect x="687.1" y="443.2" width="119.6" height="66" fill="#c3b877" stroke="#e8e8e8" stroke-width="1.6"/><rect x="687.1" y="529.3" width="119.6" height="66.1" fill="#c2c06c" stroke="#e8e8e8" stroke-width="1.6"/><text x="746.9" y="612.5" font-size="13.5" fill="#f0f0f0" text-anchor="middle" font-weight="normal" stroke="#f0f0f0" stroke-width="0.45">60%</text><rect x="826.95" y="443.2" width="119.6" height="66" fill="#c2b25a" stroke="#e8e8e8" stroke-width="1.6"/><rect x="826.95" y="529.3" width="119.6" height="66.1" fill="#c1be4e" stroke="#e8e8e8" stroke-width="1.6"/><text x="886.75" y="612.5" font-size="13.5" fill="#f0f0f0" text-anchor="middle" font-weight="normal" stroke="#f0f0f0" stroke-width="0.45">80%</text><rect x="966.8" y="443.2" width="119.6" height="66" fill="#bfae1a" stroke="#e8e8e8" stroke-width="1.6"/><rect x="966.8" y="529.3" width="119.6" height="66.1" fill="#c2be00" stroke="#e8e8e8" stroke-width="1.6"/><text x="1026.6" y="612.5" font-size="13.5" fill="#f0f0f0" text-anchor="middle" font-weight="normal" stroke="#f0f0f0" stroke-width="0.45">100%</text><text x="0" y="0" font-size="13.5" fill="#f0f0f0" text-anchor="middle" font-weight="normal" stroke="#f0f0f0" stroke-width="0.45" transform="translate(395.8 476.5) rotate(-90)">Actual</text><text x="0" y="0" font-size="13.5" fill="#f0f0f0" text-anchor="middle" font-weight="normal" stroke="#f0f0f0" stroke-width="0.45" transform="translate(395.8 562) rotate(-90)">Target</text><rect x="398.9" y="660" width="699.5" height="286.5" fill="#242424"/><text x="736.3" y="653.4" font-size="17" fill="#dedede" text-anchor="middle" font-weight="normal" textLength="91" lengthAdjust="spacingAndGlyphs">DeltaE 2000</text><line x1="398.9" y1="853" x2="1098.4" y2="853" stroke="#858585" stroke-width="2"/><line x1="398.9" y1="757.1" x2="1098.4" y2="757.1" stroke="#858585" stroke-width="2"/><rect x="527.28" y="847.1" width="11.8" height="99.9" fill="#050505"/><rect x="528.78" y="848.6" width="8.8" height="96.9" fill="url(#g4)"/><rect x="539.86" y="844.5" width="11.8" height="102.5" fill="#050505"/><rect x="541.36" y="846" width="8.8" height="99.5" fill="url(#g5)"/><rect x="552.44" y="869.5" width="11.8" height="77.5" fill="#050505"/><rect x="553.94" y="871" width="8.8" height="74.5" fill="url(#g6)"/><rect x="565.02" y="882.5" width="11.8" height="64.5" fill="#050505"/><rect x="566.52" y="884" width="8.8" height="61.5" fill="url(#g7)"/><rect x="577.6" y="844.5" width="11.8" height="102.5" fill="#050505"/><rect x="579.1" y="846" width="8.8" height="99.5" fill="url(#g8)"/><rect x="590.18" y="892.2" width="11.8" height="54.8" fill="#050505"/><rect x="591.68" y="893.7" width="8.8" height="51.8" fill="url(#g9)"/><rect x="643.86" y="839.1" width="11.8" height="107.9" fill="#050505"/><rect x="645.36" y="840.6" width="8.8" height="104.9" fill="url(#g10)"/><rect x="656.44" y="828.7" width="11.8" height="118.3" fill="#050505"/><rect x="657.94" y="830.2" width="8.8" height="115.3" fill="url(#g11)"/><rect x="669.02" y="844.4" width="11.8" height="102.6" fill="#050505"/><rect x="670.52" y="845.9" width="8.8" height="99.6" fill="url(#g12)"/><rect x="681.6" y="855" width="11.8" height="92" fill="#050505"/><rect x="683.1" y="856.5" width="8.8" height="89" fill="url(#g13)"/><rect x="694.18" y="819.1" width="11.8" height="127.9" fill="#050505"/><rect x="695.68" y="820.6" width="8.8" height="124.9" fill="url(#g14)"/><rect x="706.76" y="877.4" width="11.8" height="69.6" fill="#050505"/><rect x="708.26" y="878.9" width="8.8" height="66.6" fill="url(#g15)"/><rect x="760.44" y="836.5" width="11.8" height="110.5" fill="#050505"/><rect x="761.94" y="838" width="8.8" height="107.5" fill="url(#g16)"/><rect x="773.02" y="817.3" width="11.8" height="129.7" fill="#050505"/><rect x="774.52" y="818.8" width="8.8" height="126.7" fill="url(#g17)"/><rect x="785.6" y="798.8" width="11.8" height="148.2" fill="#050505"/><rect x="787.1" y="800.3" width="8.8" height="145.2" fill="url(#g18)"/><rect x="798.18" y="845" width="11.8" height="102" fill="#050505"/><rect x="799.68" y="846.5" width="8.8" height="99" fill="url(#g19)"/><rect x="810.76" y="796.7" width="11.8" height="150.3" fill="#050505"/><rect x="812.26" y="798.2" width="8.8" height="147.3" fill="url(#g20)"/><rect x="823.34" y="872.4" width="11.8" height="74.6" fill="#050505"/><rect x="824.84" y="873.9" width="8.8" height="71.6" fill="url(#g21)"/><rect x="877.02" y="836.5" width="11.8" height="110.5" fill="#050505"/><rect x="878.52" y="838" width="8.8" height="107.5" fill="url(#g22)"/><rect x="889.6" y="809.8" width="11.8" height="137.2" fill="#050505"/><rect x="891.1" y="811.3" width="8.8" height="134.2" fill="url(#g23)"/><rect x="902.18" y="751" width="11.8" height="196" fill="#050505"/><rect x="903.68" y="752.5" width="8.8" height="193" fill="url(#g24)"/><rect x="914.76" y="843.1" width="11.8" height="103.9" fill="#050505"/><rect x="916.26" y="844.6" width="8.8" height="100.9" fill="url(#g25)"/><rect x="927.34" y="773.3" width="11.8" height="173.7" fill="#050505"/><rect x="928.84" y="774.8" width="8.8" height="170.7" fill="url(#g26)"/><rect x="939.92" y="869.4" width="11.8" height="77.6" fill="#050505"/><rect x="941.42" y="870.9" width="8.8" height="74.6" fill="url(#g27)"/><rect x="993.6" y="822.4" width="11.8" height="124.6" fill="#050505"/><rect x="995.1" y="823.9" width="8.8" height="121.6" fill="url(#g28)"/><rect x="1006.18" y="778.4" width="11.8" height="168.6" fill="#050505"/><rect x="1007.68" y="779.9" width="8.8" height="165.6" fill="url(#g29)"/><rect x="1018.76" y="685.9" width="11.8" height="261.1" fill="#050505"/><rect x="1020.26" y="687.4" width="8.8" height="258.1" fill="url(#g30)"/><rect x="1031.34" y="842.9" width="11.8" height="104.1" fill="#050505"/><rect x="1032.84" y="844.4" width="8.8" height="101.1" fill="url(#g31)"/><rect x="1043.92" y="781.3" width="11.8" height="165.7" fill="#050505"/><rect x="1045.42" y="782.8" width="8.8" height="162.7" fill="url(#g32)"/><rect x="1056.5" y="863.2" width="11.8" height="83.8" fill="#050505"/><rect x="1058" y="864.7" width="8.8" height="80.8" fill="url(#g33)"/><rect x="484.2" y="932" width="12.4" height="15" fill="#050505"/><rect x="485.7" y="933.5" width="9.4" height="12" fill="url(#g34)"/><line x1="398.9" y1="889.6" x2="1098.4" y2="889.6" stroke="#e6e600" stroke-width="2"/><line x1="398.9" y1="928.1" x2="1098.4" y2="928.1" stroke="#0a8a0a" stroke-width="2"/><line x1="398.9" y1="754.6" x2="1098.4" y2="754.6" stroke="#dd1111" stroke-width="2.4"/><line x1="398.9" y1="660" x2="1099.4" y2="660" stroke="#808080" stroke-width="4"/><line x1="398.9" y1="658" x2="398.9" y2="954" stroke="#9a9a9a" stroke-width="2"/><line x1="1098.4" y1="658" x2="1098.4" y2="954" stroke="#9a9a9a" stroke-width="2"/><line x1="398.9" y1="946.5" x2="1098.4" y2="946.5" stroke="#9a9a9a" stroke-width="2.4"/><line x1="398.9" y1="946" x2="398.9" y2="954" stroke="#d0d0d0" stroke-width="2"/><line x1="515.48" y1="946" x2="515.48" y2="954" stroke="#d0d0d0" stroke-width="2"/><line x1="632.06" y1="946" x2="632.06" y2="954" stroke="#d0d0d0" stroke-width="2"/><line x1="748.64" y1="946" x2="748.64" y2="954" stroke="#d0d0d0" stroke-width="2"/><line x1="865.22" y1="946" x2="865.22" y2="954" stroke="#d0d0d0" stroke-width="2"/><line x1="981.8" y1="946" x2="981.8" y2="954" stroke="#d0d0d0" stroke-width="2"/><line x1="1098.38" y1="946" x2="1098.38" y2="954" stroke="#d0d0d0" stroke-width="2"/><line x1="391.9" y1="661" x2="398.9" y2="661" stroke="#d0d0d0" stroke-width="2"/><text x="391.5" y="666" font-size="17" fill="#dcdcdc" text-anchor="end" font-weight="normal">15</text><line x1="391.9" y1="757.1" x2="398.9" y2="757.1" stroke="#d0d0d0" stroke-width="2"/><text x="391.5" y="762.1" font-size="17" fill="#dcdcdc" text-anchor="end" font-weight="normal">10</text><line x1="391.9" y1="853" x2="398.9" y2="853" stroke="#d0d0d0" stroke-width="2"/><text x="391.5" y="858" font-size="17" fill="#dcdcdc" text-anchor="end" font-weight="normal">5</text><line x1="391.9" y1="946.5" x2="398.9" y2="946.5" stroke="#d0d0d0" stroke-width="2"/><text x="391.5" y="951.5" font-size="17" fill="#dcdcdc" text-anchor="end" font-weight="normal">0</text><text x="457.19" y="965.8" font-size="16.5" fill="#d4d4d4" text-anchor="middle" font-weight="normal">100</text><text x="573.77" y="965.8" font-size="16.5" fill="#d4d4d4" text-anchor="middle" font-weight="normal">20%</text><text x="690.35" y="965.8" font-size="16.5" fill="#d4d4d4" text-anchor="middle" font-weight="normal">40%</text><text x="806.93" y="965.8" font-size="16.5" fill="#d4d4d4" text-anchor="middle" font-weight="normal">60%</text><text x="923.51" y="965.8" font-size="16.5" fill="#d4d4d4" text-anchor="middle" font-weight="normal">80%</text><text x="1040.09" y="965.8" font-size="16.5" fill="#d4d4d4" text-anchor="middle" font-weight="normal">100%</text><text x="13.5" y="761" font-size="33" fill="#f0f0f0" text-anchor="start" font-weight="normal" stroke="#f0f0f0" stroke-width="0.3" textLength="252" lengthAdjust="spacingAndGlyphs">Current Reading</text><text x="13" y="809.8" font-size="27" fill="#f0f0f0" text-anchor="start" font-weight="normal" stroke="#f0f0f0" stroke-width="0.3" textLength="117" lengthAdjust="spacingAndGlyphs">x: 0,4281</text><text x="13" y="856.7" font-size="27" fill="#f0f0f0" text-anchor="start" font-weight="normal" stroke="#f0f0f0" stroke-width="0.3" textLength="117.5" lengthAdjust="spacingAndGlyphs">y: 0,4921</text><text x="13" y="903.3" font-size="27" fill="#f0f0f0" text-anchor="start" font-weight="normal" stroke="#f0f0f0" stroke-width="0.3" textLength="126.5" lengthAdjust="spacingAndGlyphs">fL: 30,547</text><text x="13" y="950.3" font-size="27" fill="#f0f0f0" text-anchor="start" font-weight="normal" stroke="#f0f0f0" stroke-width="0.3" textLength="199" lengthAdjust="spacingAndGlyphs">cd/m²: 104,661</text><rect x="1125.5" y="52.5" width="794.1" height="652.6" fill="none" stroke="#ffff00" stroke-width="8"/><rect x="1163" y="83.5" width="749" height="584.9" fill="#242424"/><text x="1522.6" y="77.7" font-size="17" fill="#dedede" text-anchor="middle" font-weight="normal" textLength="87" lengthAdjust="spacingAndGlyphs">CIE 1931 xy</text><g id="fb"><g clip-path="url(#clL)"><rect x="1160" y="80" width="760" height="600" fill="url(#fbL)"/><polygon points="1429.45,250.56 2220.16,-1024.11 2523.27,-836.08 1732.56,438.59" fill="url(#fbGR)"/><polygon points="1295.72,626.62 1888.77,2004.4 2325.6,1816.38 1732.56,438.59" fill="url(#fbBR)"/><polygon points="1732.56,438.59 2523.27,-836.08 3232.56,438.59 2325.6,1816.38" fill="#990000"/></g><g clip-path="url(#clT)"><polygon points="1440.77,439.28 1732.56,438.59 1713.62,426.84" fill="#ff0400" stroke="#ff0400" stroke-width="0.8"/><polygon points="1440.77,439.28 1713.62,426.84 1694.67,415.08" fill="#ff0e00" stroke="#ff0e00" stroke-width="0.8"/><polygon points="1440.77,439.28 1694.67,415.08 1675.73,403.33" fill="#ff1a00" stroke="#ff1a00" stroke-width="0.8"/><polygon points="1440.77,439.28 1675.73,403.33 1656.78,391.58" fill="#ff2700" stroke="#ff2700" stroke-width="0.8"/><polygon points="1440.77,439.28 1656.78,391.58 1637.84,379.83" fill="#ff3600" stroke="#ff3600" stroke-width="0.8"/><polygon points="1440.77,439.28 1637.84,379.83 1618.89,368.08" fill="#ff4800" stroke="#ff4800" stroke-width="0.8"/><polygon points="1440.77,439.28 1618.89,368.08 1599.95,356.33" fill="#ff5e00" stroke="#ff5e00" stroke-width="0.8"/><polygon points="1440.77,439.28 1599.95,356.33 1581.01,344.57" fill="#ff7a00" stroke="#ff7a00" stroke-width="0.8"/><polygon points="1440.77,439.28 1581.01,344.57 1562.06,332.82" fill="#ff9c00" stroke="#ff9c00" stroke-width="0.8"/><polygon points="1440.77,439.28 1562.06,332.82 1543.12,321.07" fill="#ffca00" stroke="#ffca00" stroke-width="0.8"/><polygon points="1440.77,439.28 1543.12,321.07 1524.17,309.32" fill="#f7ff00" stroke="#f7ff00" stroke-width="0.8"/><polygon points="1440.77,439.28 1524.17,309.32 1505.23,297.57" fill="#b9ff00" stroke="#b9ff00" stroke-width="0.8"/><polygon points="1440.77,439.28 1505.23,297.57 1486.28,285.82" fill="#84ff00" stroke="#84ff00" stroke-width="0.8"/><polygon points="1440.77,439.28 1486.28,285.82 1467.34,274.06" fill="#57ff00" stroke="#57ff00" stroke-width="0.8"/><polygon points="1440.77,439.28 1467.34,274.06 1448.39,262.31" fill="#31ff00" stroke="#31ff00" stroke-width="0.8"/><polygon points="1440.77,439.28 1448.39,262.31 1429.45,250.56" fill="#0fff00" stroke="#0fff00" stroke-width="0.8"/><polygon points="1440.77,439.28 1429.45,250.56 1421.09,274.06" fill="#00ff08" stroke="#00ff08" stroke-width="0.8"/><polygon points="1440.77,439.28 1421.09,274.06 1412.73,297.57" fill="#00ff1a" stroke="#00ff1a" stroke-width="0.8"/><polygon points="1440.77,439.28 1412.73,297.57 1404.38,321.07" fill="#00ff2f" stroke="#00ff2f" stroke-width="0.8"/><polygon points="1440.77,439.28 1404.38,321.07 1396.02,344.57" fill="#00ff47" stroke="#00ff47" stroke-width="0.8"/><polygon points="1440.77,439.28 1396.02,344.57 1387.66,368.08" fill="#00ff63" stroke="#00ff63" stroke-width="0.8"/><polygon points="1440.77,439.28 1387.66,368.08 1379.3,391.58" fill="#00ff84" stroke="#00ff84" stroke-width="0.8"/><polygon points="1440.77,439.28 1379.3,391.58 1370.95,415.08" fill="#00ffad" stroke="#00ffad" stroke-width="0.8"/><polygon points="1440.77,439.28 1370.95,415.08 1362.59,438.59" fill="#00ffdf" stroke="#00ffdf" stroke-width="0.8"/><polygon points="1440.77,439.28 1362.59,438.59 1354.23,462.09" fill="#00e3ff" stroke="#00e3ff" stroke-width="0.8"/><polygon points="1440.77,439.28 1354.23,462.09 1345.87,485.6" fill="#00b0ff" stroke="#00b0ff" stroke-width="0.8"/><polygon points="1440.77,439.28 1345.87,485.6 1337.51,509.1" fill="#0087ff" stroke="#0087ff" stroke-width="0.8"/><polygon points="1440.77,439.28 1337.51,509.1 1329.16,532.6" fill="#0065ff" stroke="#0065ff" stroke-width="0.8"/><polygon points="1440.77,439.28 1329.16,532.6 1320.8,556.11" fill="#0048ff" stroke="#0048ff" stroke-width="0.8"/><polygon points="1440.77,439.28 1320.8,556.11 1312.44,579.61" fill="#0030ff" stroke="#0030ff" stroke-width="0.8"/><polygon points="1440.77,439.28 1312.44,579.61 1304.08,603.11" fill="#001bff" stroke="#001bff" stroke-width="0.8"/><polygon points="1440.77,439.28 1304.08,603.11 1295.72,626.62" fill="#0008ff" stroke="#0008ff" stroke-width="0.8"/><polygon points="1440.77,439.28 1295.72,626.62 1323.03,614.86" fill="#0f00ff" stroke="#0f00ff" stroke-width="0.8"/><polygon points="1440.77,439.28 1323.03,614.86 1350.33,603.11" fill="#3100ff" stroke="#3100ff" stroke-width="0.8"/><polygon points="1440.77,439.28 1350.33,603.11 1377.63,591.36" fill="#5800ff" stroke="#5800ff" stroke-width="0.8"/><polygon points="1440.77,439.28 1377.63,591.36 1404.93,579.61" fill="#8500ff" stroke="#8500ff" stroke-width="0.8"/><polygon points="1440.77,439.28 1404.93,579.61 1432.24,567.86" fill="#ba00ff" stroke="#ba00ff" stroke-width="0.8"/><polygon points="1440.77,439.28 1432.24,567.86 1459.54,556.11" fill="#f900ff" stroke="#f900ff" stroke-width="0.8"/><polygon points="1440.77,439.28 1459.54,556.11 1486.84,544.35" fill="#ff00c8" stroke="#ff00c8" stroke-width="0.8"/><polygon points="1440.77,439.28 1486.84,544.35 1514.14,532.6" fill="#ff009b" stroke="#ff009b" stroke-width="0.8"/><polygon points="1440.77,439.28 1514.14,532.6 1541.44,520.85" fill="#ff0079" stroke="#ff0079" stroke-width="0.8"/><polygon points="1440.77,439.28 1541.44,520.85 1568.75,509.1" fill="#ff005d" stroke="#ff005d" stroke-width="0.8"/><polygon points="1440.77,439.28 1568.75,509.1 1596.05,497.35" fill="#ff0048" stroke="#ff0048" stroke-width="0.8"/><polygon points="1440.77,439.28 1596.05,497.35 1623.35,485.59" fill="#ff0035" stroke="#ff0035" stroke-width="0.8"/><polygon points="1440.77,439.28 1623.35,485.59 1650.65,473.84" fill="#ff0026" stroke="#ff0026" stroke-width="0.8"/><polygon points="1440.77,439.28 1650.65,473.84 1677.96,462.09" fill="#ff0019" stroke="#ff0019" stroke-width="0.8"/><polygon points="1440.77,439.28 1677.96,462.09 1705.26,450.34" fill="#ff000e" stroke="#ff000e" stroke-width="0.8"/><polygon points="1440.77,439.28 1705.26,450.34 1732.56,438.59" fill="#ff0004" stroke="#ff0004" stroke-width="0.8"/><rect x="1160" y="80" width="760" height="600" fill="url(#fbW)"/></g></g><g id="fbi" clip-path="url(#clI)"><rect x="1699" y="85" width="213" height="211" fill="url(#fbIin)"/><polygon points="1690,98.51 1920,281.16 1920,70 1690,70" fill="url(#fbIout)"/></g><rect x="1123.4" y="719.5" width="19.4" height="35.4" fill="#000000"/><rect x="1142.8" y="719.5" width="571.8" height="17" fill="#2e2e2e"/><rect x="1142.8" y="736.5" width="571.8" height="18.4" fill="#141414"/><text x="1308.5" y="744.7" font-size="18.8" fill="#f0f0f0" text-anchor="start" font-weight="normal" stroke="#f0f0f0" stroke-width="0.5" textLength="39" lengthAdjust="spacingAndGlyphs">20%</text><text x="1391" y="744.7" font-size="18.8" fill="#f0f0f0" text-anchor="start" font-weight="normal" stroke="#f0f0f0" stroke-width="0.5" textLength="39" lengthAdjust="spacingAndGlyphs">40%</text><text x="1473.5" y="744.7" font-size="18.8" fill="#f0f0f0" text-anchor="start" font-weight="normal" stroke="#f0f0f0" stroke-width="0.5" textLength="39" lengthAdjust="spacingAndGlyphs">60%</text><text x="1556" y="744.7" font-size="18.8" fill="#f0f0f0" text-anchor="start" font-weight="normal" stroke="#f0f0f0" stroke-width="0.5" textLength="39" lengthAdjust="spacingAndGlyphs">80%</text><text x="1638.5" y="744.7" font-size="18.8" fill="#f0f0f0" text-anchor="start" font-weight="normal" stroke="#f0f0f0" stroke-width="0.5" textLength="50.5" lengthAdjust="spacingAndGlyphs">100%</text><rect x="1123.4" y="754.9" width="19.4" height="32.75" fill="#222222"/><rect x="1142.8" y="754.9" width="571.8" height="32.75" fill="#444444"/><text x="1148.5" y="779.1" font-size="21.5" fill="#f0f0f0" text-anchor="start" font-weight="normal">x: CIE31</text><text x="1308.5" y="779.1" font-size="21.6" fill="#f0f0f0" text-anchor="start" font-weight="normal">0,33</text><text x="1391" y="779.1" font-size="21.6" fill="#f0f0f0" text-anchor="start" font-weight="normal">0,35</text><text x="1473.5" y="779.1" font-size="21.6" fill="#f0f0f0" text-anchor="start" font-weight="normal">0,37</text><text x="1556" y="779.1" font-size="21.6" fill="#f0f0f0" text-anchor="start" font-weight="normal">0,40</text><text x="1638.5" y="779.1" font-size="21.6" fill="#f0f0f0" text-anchor="start" font-weight="normal">0,43</text><rect x="1123.4" y="787.65" width="19.4" height="32.75" fill="#1e1e1e"/><rect x="1142.8" y="787.65" width="571.8" height="32.75" fill="#808080"/><text x="1148.5" y="811.85" font-size="21.5" fill="#f0f0f0" text-anchor="start" font-weight="normal">y: CIE31</text><text x="1308.5" y="811.85" font-size="21.6" fill="#f0f0f0" text-anchor="start" font-weight="normal">0,36</text><text x="1391" y="811.85" font-size="21.6" fill="#f0f0f0" text-anchor="start" font-weight="normal">0,39</text><text x="1473.5" y="811.85" font-size="21.6" fill="#f0f0f0" text-anchor="start" font-weight="normal">0,42</text><text x="1556" y="811.85" font-size="21.6" fill="#f0f0f0" text-anchor="start" font-weight="normal">0,45</text><text x="1638.5" y="811.85" font-size="21.6" fill="#f0f0f0" text-anchor="start" font-weight="normal">0,49</text><rect x="1123.4" y="820.4" width="19.4" height="32.75" fill="#222222"/><rect x="1142.8" y="820.4" width="571.8" height="32.75" fill="#444444"/><text x="1148.5" y="844.6" font-size="21.5" fill="#f0f0f0" text-anchor="start" font-weight="normal">Y</text><text x="1308.5" y="844.6" font-size="21.6" fill="#f0f0f0" text-anchor="start" font-weight="normal">123,83</text><text x="1391" y="844.6" font-size="21.6" fill="#f0f0f0" text-anchor="start" font-weight="normal">118,86</text><text x="1473.5" y="844.6" font-size="21.6" fill="#f0f0f0" text-anchor="start" font-weight="normal">114,71</text><text x="1556" y="844.6" font-size="21.6" fill="#f0f0f0" text-anchor="start" font-weight="normal">111,16</text><text x="1638.5" y="844.6" font-size="21.6" fill="#f0f0f0" text-anchor="start" font-weight="normal">104,66</text><rect x="1123.4" y="853.15" width="19.4" height="32.75" fill="#1e1e1e"/><rect x="1142.8" y="853.15" width="571.8" height="32.75" fill="#808080"/><text x="1148.5" y="877.35" font-size="21.5" fill="#f0f0f0" text-anchor="start" font-weight="normal" textLength="145" lengthAdjust="spacingAndGlyphs">Target x:CIE31</text><text x="1308.5" y="877.35" font-size="21.6" fill="#f0f0f0" text-anchor="start" font-weight="normal">0,33</text><text x="1391" y="877.35" font-size="21.6" fill="#f0f0f0" text-anchor="start" font-weight="normal">0,36</text><text x="1473.5" y="877.35" font-size="21.6" fill="#f0f0f0" text-anchor="start" font-weight="normal">0,38</text><text x="1556" y="877.35" font-size="21.6" fill="#f0f0f0" text-anchor="start" font-weight="normal">0,40</text><text x="1638.5" y="877.35" font-size="21.6" fill="#f0f0f0" text-anchor="start" font-weight="normal">0,42</text><rect x="1123.4" y="885.9" width="19.4" height="32.75" fill="#222222"/><rect x="1142.8" y="885.9" width="571.8" height="32.75" fill="#444444"/><text x="1148.5" y="910.1" font-size="21.5" fill="#f0f0f0" text-anchor="start" font-weight="normal" textLength="145" lengthAdjust="spacingAndGlyphs">Target y:CIE31</text><text x="1308.5" y="910.1" font-size="21.6" fill="#f0f0f0" text-anchor="start" font-weight="normal">0,36</text><text x="1391" y="910.1" font-size="21.6" fill="#f0f0f0" text-anchor="start" font-weight="normal">0,40</text><text x="1473.5" y="910.1" font-size="21.6" fill="#f0f0f0" text-anchor="start" font-weight="normal">0,44</text><text x="1556" y="910.1" font-size="21.6" fill="#f0f0f0" text-anchor="start" font-weight="normal">0,47</text><text x="1638.5" y="910.1" font-size="21.6" fill="#f0f0f0" text-anchor="start" font-weight="normal">0,51</text><rect x="1123.4" y="918.65" width="19.4" height="32.75" fill="#1e1e1e"/><rect x="1142.8" y="918.65" width="571.8" height="32.75" fill="#808080"/><text x="1148.5" y="942.85" font-size="21.5" fill="#f0f0f0" text-anchor="start" font-weight="normal">Target Y</text><text x="1308.5" y="942.85" font-size="21.6" fill="#f0f0f0" text-anchor="start" font-weight="normal">125,83</text><text x="1391" y="942.85" font-size="21.6" fill="#f0f0f0" text-anchor="start" font-weight="normal">123,62</text><text x="1473.5" y="942.85" font-size="21.6" fill="#f0f0f0" text-anchor="start" font-weight="normal">121,92</text><text x="1556" y="942.85" font-size="21.6" fill="#f0f0f0" text-anchor="start" font-weight="normal">120,59</text><text x="1638.5" y="942.85" font-size="21.6" fill="#f0f0f0" text-anchor="start" font-weight="normal">119,31</text>
</svg>
<canvas id="cie" width="670" height="592" style="left:1160px;top:80px"></canvas>
<canvas id="inset" width="213" height="211" style="left:1699px;top:85px"></canvas>
<svg width="1920" height="1003" viewBox="0 0 1920 1003">
<line x1="1163" y1="83.5" x2="1696" y2="83.5" stroke="#8a8a8a" stroke-width="2"/><line x1="1163" y1="82.5" x2="1163" y2="675" stroke="#8a8a8a" stroke-width="2.4"/><line x1="1162" y1="668.4" x2="1913" y2="668.4" stroke="#8a8a8a" stroke-width="2.4"/><line x1="1912" y1="296" x2="1912" y2="669.5" stroke="#8a8a8a" stroke-width="2"/><line x1="1156" y1="668.4" x2="1163" y2="668.4" stroke="#d0d0d0" stroke-width="2"/><text x="1156.5" y="675.9" font-size="17" fill="#dcdcdc" text-anchor="end" font-weight="normal">0</text><line x1="1162" y1="668" x2="1162" y2="675" stroke="#d0d0d0" stroke-width="2"/><text x="1162.5" y="692.8" font-size="17" fill="#dcdcdc" text-anchor="middle" font-weight="normal">0</text><line x1="1156" y1="598.76" x2="1163" y2="598.76" stroke="#d0d0d0" stroke-width="2"/><text x="1156.5" y="606.26" font-size="17" fill="#dcdcdc" text-anchor="end" font-weight="normal">0,1</text><line x1="1251.15" y1="668" x2="1251.15" y2="675" stroke="#d0d0d0" stroke-width="2"/><text x="1251.65" y="692.8" font-size="17" fill="#dcdcdc" text-anchor="middle" font-weight="normal">0,1</text><line x1="1156" y1="529.12" x2="1163" y2="529.12" stroke="#d0d0d0" stroke-width="2"/><text x="1156.5" y="536.62" font-size="17" fill="#dcdcdc" text-anchor="end" font-weight="normal">0,2</text><line x1="1340.3" y1="668" x2="1340.3" y2="675" stroke="#d0d0d0" stroke-width="2"/><text x="1340.8" y="692.8" font-size="17" fill="#dcdcdc" text-anchor="middle" font-weight="normal">0,2</text><line x1="1156" y1="459.48" x2="1163" y2="459.48" stroke="#d0d0d0" stroke-width="2"/><text x="1156.5" y="466.98" font-size="17" fill="#dcdcdc" text-anchor="end" font-weight="normal">0,3</text><line x1="1429.45" y1="668" x2="1429.45" y2="675" stroke="#d0d0d0" stroke-width="2"/><text x="1429.95" y="692.8" font-size="17" fill="#dcdcdc" text-anchor="middle" font-weight="normal">0,3</text><line x1="1156" y1="389.84" x2="1163" y2="389.84" stroke="#d0d0d0" stroke-width="2"/><text x="1156.5" y="397.34" font-size="17" fill="#dcdcdc" text-anchor="end" font-weight="normal">0,4</text><line x1="1518.6" y1="668" x2="1518.6" y2="675" stroke="#d0d0d0" stroke-width="2"/><text x="1519.1" y="692.8" font-size="17" fill="#dcdcdc" text-anchor="middle" font-weight="normal">0,4</text><line x1="1156" y1="320.2" x2="1163" y2="320.2" stroke="#d0d0d0" stroke-width="2"/><text x="1156.5" y="327.7" font-size="17" fill="#dcdcdc" text-anchor="end" font-weight="normal">0,5</text><line x1="1607.75" y1="668" x2="1607.75" y2="675" stroke="#d0d0d0" stroke-width="2"/><text x="1608.25" y="692.8" font-size="17" fill="#dcdcdc" text-anchor="middle" font-weight="normal">0,5</text><line x1="1156" y1="250.56" x2="1163" y2="250.56" stroke="#d0d0d0" stroke-width="2"/><text x="1156.5" y="258.06" font-size="17" fill="#dcdcdc" text-anchor="end" font-weight="normal">0,6</text><line x1="1696.9" y1="668" x2="1696.9" y2="675" stroke="#d0d0d0" stroke-width="2"/><text x="1697.4" y="692.8" font-size="17" fill="#dcdcdc" text-anchor="middle" font-weight="normal">0,6</text><line x1="1156" y1="180.92" x2="1163" y2="180.92" stroke="#d0d0d0" stroke-width="2"/><text x="1156.5" y="188.42" font-size="17" fill="#dcdcdc" text-anchor="end" font-weight="normal">0,7</text><line x1="1786.05" y1="668" x2="1786.05" y2="675" stroke="#d0d0d0" stroke-width="2"/><text x="1786.55" y="692.8" font-size="17" fill="#dcdcdc" text-anchor="middle" font-weight="normal">0,7</text><line x1="1156" y1="111.28" x2="1163" y2="111.28" stroke="#d0d0d0" stroke-width="2"/><text x="1156.5" y="118.78" font-size="17" fill="#dcdcdc" text-anchor="end" font-weight="normal">0,8</text><line x1="1875.2" y1="668" x2="1875.2" y2="675" stroke="#d0d0d0" stroke-width="2"/><text x="1875.7" y="692.8" font-size="17" fill="#dcdcdc" text-anchor="middle" font-weight="normal">0,8</text><rect x="1699" y="84.7" width="213" height="211.3" fill="none" stroke="#8c8c8c" stroke-width="2"/><rect x="1796" y="181" width="16.4" height="16.4" fill="none" stroke="#f4f4f4" stroke-width="2.2"/><circle cx="1842.5" cy="244.7" r="5" fill="#b8b400" stroke="#2a2a2a" stroke-width="1.6"/><rect x="1490.4" y="431.3" width="15" height="15" fill="none" stroke="#f4f4f4" stroke-width="2"/><rect x="1550.4" y="429.8" width="15" height="15" fill="none" stroke="#f4f4f4" stroke-width="2"/><rect x="1604" y="429.8" width="15" height="15" fill="none" stroke="#f4f4f4" stroke-width="2"/><rect x="1660.6" y="429.8" width="15" height="15" fill="none" stroke="#f4f4f4" stroke-width="2"/><rect x="1725.3" y="429.8" width="15" height="15" fill="none" stroke="#f4f4f4" stroke-width="2"/><rect x="1431.4" y="393.2" width="15" height="15" fill="none" stroke="#f4f4f4" stroke-width="2"/><rect x="1429.2" y="355.4" width="15" height="15" fill="none" stroke="#f4f4f4" stroke-width="2"/><rect x="1426.3" y="319.5" width="15" height="15" fill="none" stroke="#f4f4f4" stroke-width="2"/><rect x="1424.4" y="283.9" width="15" height="15" fill="none" stroke="#f4f4f4" stroke-width="2"/><rect x="1421.5" y="242.1" width="15" height="15" fill="none" stroke="#f4f4f4" stroke-width="2"/><rect x="1404" y="469" width="15" height="15" fill="none" stroke="#f4f4f4" stroke-width="2"/><rect x="1376.2" y="505.2" width="15" height="15" fill="none" stroke="#f4f4f4" stroke-width="2"/><rect x="1346.9" y="540.8" width="15" height="15" fill="none" stroke="#f4f4f4" stroke-width="2"/><rect x="1318.6" y="577.9" width="15" height="15" fill="none" stroke="#f4f4f4" stroke-width="2"/><rect x="1287.7" y="618.1" width="15" height="15" fill="none" stroke="#f4f4f4" stroke-width="2"/><rect x="1418.2" y="431.5" width="15" height="15" fill="none" stroke="#f4f4f4" stroke-width="2"/><rect x="1402.3" y="431.5" width="15" height="15" fill="none" stroke="#f4f4f4" stroke-width="2"/><rect x="1386.5" y="431.5" width="15" height="15" fill="none" stroke="#f4f4f4" stroke-width="2"/><rect x="1370.6" y="431.5" width="15" height="15" fill="none" stroke="#f4f4f4" stroke-width="2"/><rect x="1354.7" y="431.5" width="15" height="15" fill="none" stroke="#f4f4f4" stroke-width="2"/><rect x="1435.4" y="455" width="15" height="15" fill="none" stroke="#f4f4f4" stroke-width="2"/><rect x="1437" y="480.2" width="15" height="15" fill="none" stroke="#f4f4f4" stroke-width="2"/><rect x="1437" y="502.5" width="15" height="15" fill="none" stroke="#f4f4f4" stroke-width="2"/><rect x="1438.7" y="527.7" width="15" height="15" fill="none" stroke="#f4f4f4" stroke-width="2"/><rect x="1439.6" y="552.5" width="15" height="15" fill="none" stroke="#f4f4f4" stroke-width="2"/><rect x="1452.9" y="406" width="15" height="15" fill="none" stroke="#f4f4f4" stroke-width="2"/><rect x="1472.1" y="380.5" width="15" height="15" fill="none" stroke="#f4f4f4" stroke-width="2"/><rect x="1490.1" y="355.4" width="15" height="15" fill="none" stroke="#f4f4f4" stroke-width="2"/><rect x="1507.7" y="334.2" width="15" height="15" fill="none" stroke="#f4f4f4" stroke-width="2"/><rect x="1528.1" y="309.1" width="15" height="15" fill="none" stroke="#f4f4f4" stroke-width="2"/><rect x="1434.1" y="431.5" width="15" height="15" fill="none" stroke="#111" stroke-width="2.2"/><circle cx="1479.5" cy="436" r="4.9" fill="#b08888" stroke="#262626" stroke-width="1.6"/><circle cx="1521.5" cy="432.8" r="4.9" fill="#c06060" stroke="#262626" stroke-width="1.6"/><circle cx="1556.2" cy="432.8" r="4.9" fill="#c04848" stroke="#262626" stroke-width="1.6"/><circle cx="1601.6" cy="431.3" r="4.9" fill="#c03030" stroke="#262626" stroke-width="1.6"/><circle cx="1668.1" cy="429" r="4.9" fill="#c00000" stroke="#262626" stroke-width="1.6"/><circle cx="1448" cy="410.3" r="4.9" fill="#90b090" stroke="#262626" stroke-width="1.6"/><circle cx="1452.6" cy="380.7" r="4.9" fill="#78b080" stroke="#262626" stroke-width="1.6"/><circle cx="1457.1" cy="350.9" r="4.9" fill="#5aae6a" stroke="#262626" stroke-width="1.6"/><circle cx="1463.5" cy="316.1" r="4.9" fill="#4cb84c" stroke="#262626" stroke-width="1.6"/><circle cx="1471.3" cy="265.6" r="4.9" fill="#00c000" stroke="#262626" stroke-width="1.6"/><circle cx="1416.6" cy="465.3" r="4.9" fill="#9898b8" stroke="#262626" stroke-width="1.6"/><circle cx="1393" cy="494" r="4.9" fill="#7878b0" stroke="#262626" stroke-width="1.6"/><circle cx="1367.7" cy="520.6" r="4.9" fill="#6060b0" stroke="#262626" stroke-width="1.6"/><circle cx="1342.1" cy="548.9" r="4.9" fill="#4848b0" stroke="#262626" stroke-width="1.6"/><circle cx="1307.7" cy="584.8" r="4.9" fill="#2020a0" stroke="#262626" stroke-width="1.6"/><circle cx="1430.4" cy="438.7" r="4.9" fill="#a8b8b8" stroke="#262626" stroke-width="1.6"/><circle cx="1420.9" cy="438.7" r="4.9" fill="#90b8b8" stroke="#262626" stroke-width="1.6"/><circle cx="1408.3" cy="440.3" r="4.9" fill="#70b0b0" stroke="#262626" stroke-width="1.6"/><circle cx="1397.4" cy="440.3" r="4.9" fill="#50b0b0" stroke="#262626" stroke-width="1.6"/><circle cx="1381.8" cy="441.9" r="4.9" fill="#20b0b0" stroke="#262626" stroke-width="1.6"/><circle cx="1438.4" cy="454.2" r="4.9" fill="#b8a0b8" stroke="#262626" stroke-width="1.6"/><circle cx="1435.4" cy="473.8" r="4.9" fill="#c090c0" stroke="#262626" stroke-width="1.6"/><circle cx="1432" cy="489.3" r="4.9" fill="#c070c0" stroke="#262626" stroke-width="1.6"/><circle cx="1429" cy="509.5" r="4.9" fill="#c050c0" stroke="#262626" stroke-width="1.6"/><circle cx="1424.2" cy="533.9" r="4.9" fill="#c000c0" stroke="#262626" stroke-width="1.6"/><circle cx="1458.4" cy="418.6" r="4.9" fill="#b8b8a0" stroke="#262626" stroke-width="1.6"/><circle cx="1478" cy="397.9" r="4.9" fill="#b0b080" stroke="#262626" stroke-width="1.6"/><circle cx="1496" cy="377.6" r="4.9" fill="#b0aa70" stroke="#262626" stroke-width="1.6"/><circle cx="1515.6" cy="355.7" r="4.9" fill="#b8b050" stroke="#262626" stroke-width="1.6"/><circle cx="1543.6" cy="323.8" r="4.9" fill="#c0c000" stroke="#262626" stroke-width="1.6"/><circle cx="1441.6" cy="437.4" r="4.9" fill="#ffffff" stroke="#262626" stroke-width="1.6"/>
</svg>
<script>
(function(){
var CX0=1162.0, CY0=668.4, SX=891.5, SY=696.4;
var L=[[0.1741,0.005],[0.1738,0.0049],[0.1733,0.0048],[0.1726,0.0048],[0.1714,0.0051],[0.1703,0.0058],[0.1689,0.0069],[0.1669,0.0086],[0.1644,0.0109],[0.1611,0.0138],[0.1566,0.0177],[0.151,0.0227],[0.144,0.0297],[0.1355,0.0399],[0.1241,0.0578],[0.1096,0.0868],[0.0913,0.1327],[0.0687,0.2007],[0.0454,0.295],[0.0235,0.4127],[0.0082,0.5384],[0.0039,0.6548],[0.0139,0.7502],[0.0389,0.812],[0.0743,0.8338],[0.1142,0.8262],[0.1547,0.8059],[0.1929,0.7816],[0.2296,0.7543],[0.2658,0.7243],[0.3016,0.6923],[0.3373,0.6589],[0.3731,0.6245],[0.4087,0.5896],[0.4441,0.5547],[0.4788,0.5202],[0.5125,0.4866],[0.5448,0.4544],[0.5752,0.4242],[0.6029,0.3965],[0.627,0.3725],[0.6482,0.3514],[0.6658,0.334],[0.6801,0.3197],[0.6915,0.3083],[0.7006,0.2993],[0.7079,0.292],[0.714,0.2859],[0.719,0.2809],[0.723,0.277],[0.726,0.274],[0.7283,0.2717],[0.73,0.27],[0.7311,0.2689],[0.732,0.268],[0.7334,0.2666],[0.7347,0.2653]];
var T=[[0.64,0.33],[0.30,0.60],[0.15,0.06]];
function rgbOf(x,y){
  if(y<1e-4) y=1e-4;
  var X=x/y, Z=(1-x-y)/y;
  var r=3.2406*X-1.5372-0.4986*Z, g=-0.9689*X+1.8758+0.0415*Z, b=0.0557*X-0.2040+1.0570*Z;
  return [r,g,b];
}
function norm(c){
  var r=Math.max(0,c[0]),g=Math.max(0,c[1]),b=Math.max(0,c[2]);
  var m=Math.max(r,g,b); if(m<=0) m=1;
  return [r/m,g/m,b/m];
}
// triangle vertices in pixel space
var TP=T.map(function(p){return [CX0+SX*p[0], CY0-SY*p[1]];});
function closest(px,py){
  var best=1e18,bx=0,by=0,bi=0;
  for(var i=0;i<3;i++){
    var a=TP[i], b=TP[(i+1)%3];
    var dx=b[0]-a[0], dy=b[1]-a[1];
    var t=((px-a[0])*dx+(py-a[1])*dy)/(dx*dx+dy*dy);
    if(t<0)t=0; if(t>1)t=1;
    var qx=a[0]+t*dx, qy=a[1]+t*dy;
    var d=(px-qx)*(px-qx)+(py-qy)*(py-qy);
    if(d<best){best=d;bx=qx;by=qy;bi=i;}
  }
  return [bx,by,bi];
}
var OUTK=0.6;
function colorAtPixel(px,py){
  var x=(px-CX0)/SX, y=(CY0-py)/SY;
  var c=rgbOf(x,y);
  if(c[0]>=0&&c[1]>=0&&c[2]>=0){
    return norm(c);
  }
  var q=closest(px,py);
  if(q[2]==1){
    // G-B edge: horizontal projection
    var yy=Math.min(0.60,Math.max(0.06,y));
    var xx=0.15+(yy-0.06)/0.54*0.15;
    q=[CX0+SX*xx, CY0-SY*yy];
  }
  var c2=norm(rgbOf((q[0]-CX0)/SX,(CY0-q[1])/SY));
  return [c2[0]*OUTK,c2[1]*OUTK,c2[2]*OUTK];
}
function render(canvas, ox, oy, mapFn){
  var W=canvas.width, H=canvas.height;
  var off=document.createElement('canvas'); off.width=W; off.height=H;
  var octx=off.getContext('2d');
  var img=octx.createImageData(W,H); var d=img.data;
  var S=[0.25,0.75];
  for(var j=0;j<H;j++){
    for(var i=0;i<W;i++){
      var r=0,g=0,b=0;
      for(var sj=0;sj<2;sj++)for(var si=0;si<2;si++){
        var p=mapFn(ox+i+S[si], oy+j+S[sj]);
        var c=colorAtPixel(p[0],p[1]);
        r+=c[0];g+=c[1];b+=c[2];
      }
      var k=(j*W+i)*4;
      d[k]=Math.round(r*63.75); d[k+1]=Math.round(g*63.75); d[k+2]=Math.round(b*63.75); d[k+3]=255;
    }
  }
  octx.putImageData(img,0,0);
  return off;
}
try{
  var cv=document.getElementById('cie');
  var ctx=cv.getContext('2d');
  var OX=1160, OY=80;
  var off=render(cv,OX,OY,function(x,y){return [x,y];});
  ctx.beginPath();
  var P=L.map(function(p){return [CX0+SX*p[0]-OX, CY0-SY*p[1]-OY];});
  ctx.moveTo(P[0][0],P[0][1]);
  for(var i=0;i<P.length-1;i++){
    var p0=P[Math.max(0,i-1)], p1=P[i], p2=P[i+1], p3=P[Math.min(P.length-1,i+2)];
    for(var k=1;k<=10;k++){
      var t=k/10, t2=t*t, t3=t2*t;
      var qx=0.5*((2*p1[0])+(-p0[0]+p2[0])*t+(2*p0[0]-5*p1[0]+4*p2[0]-p3[0])*t2+(-p0[0]+3*p1[0]-3*p2[0]+p3[0])*t3);
      var qy=0.5*((2*p1[1])+(-p0[1]+p2[1])*t+(2*p0[1]-5*p1[1]+4*p2[1]-p3[1])*t2+(-p0[1]+3*p1[1]-3*p2[1]+p3[1])*t3);
      ctx.lineTo(qx,qy);
    }
  }
  ctx.closePath();
  ctx.fillStyle='#fff'; ctx.fill();
  ctx.globalCompositeOperation='source-in';
  ctx.drawImage(off,0,0);
  // inset
  var iv=document.getElementById('inset');
  var ictx=iv.getContext('2d');
  var IX=1699, IY=85, K=4280, CXT=0.4193, CYT=0.5053, ICX=1804.2, ICY=189.2;
  var ioff=render(iv,IX,IY,function(x,y){
     var vx=CXT+(x-ICX)/K, vy=CYT-(y-ICY)/K;
     return [CX0+SX*vx, CY0-SY*vy];
  });
  ictx.drawImage(ioff,0,0);
  var fb=document.getElementById('fb'); if(fb) fb.style.display='none'; var fbi=document.getElementById('fbi'); if(fbi) fbi.style.display='none';
}catch(e){}
})();
</script>
</body></html>
